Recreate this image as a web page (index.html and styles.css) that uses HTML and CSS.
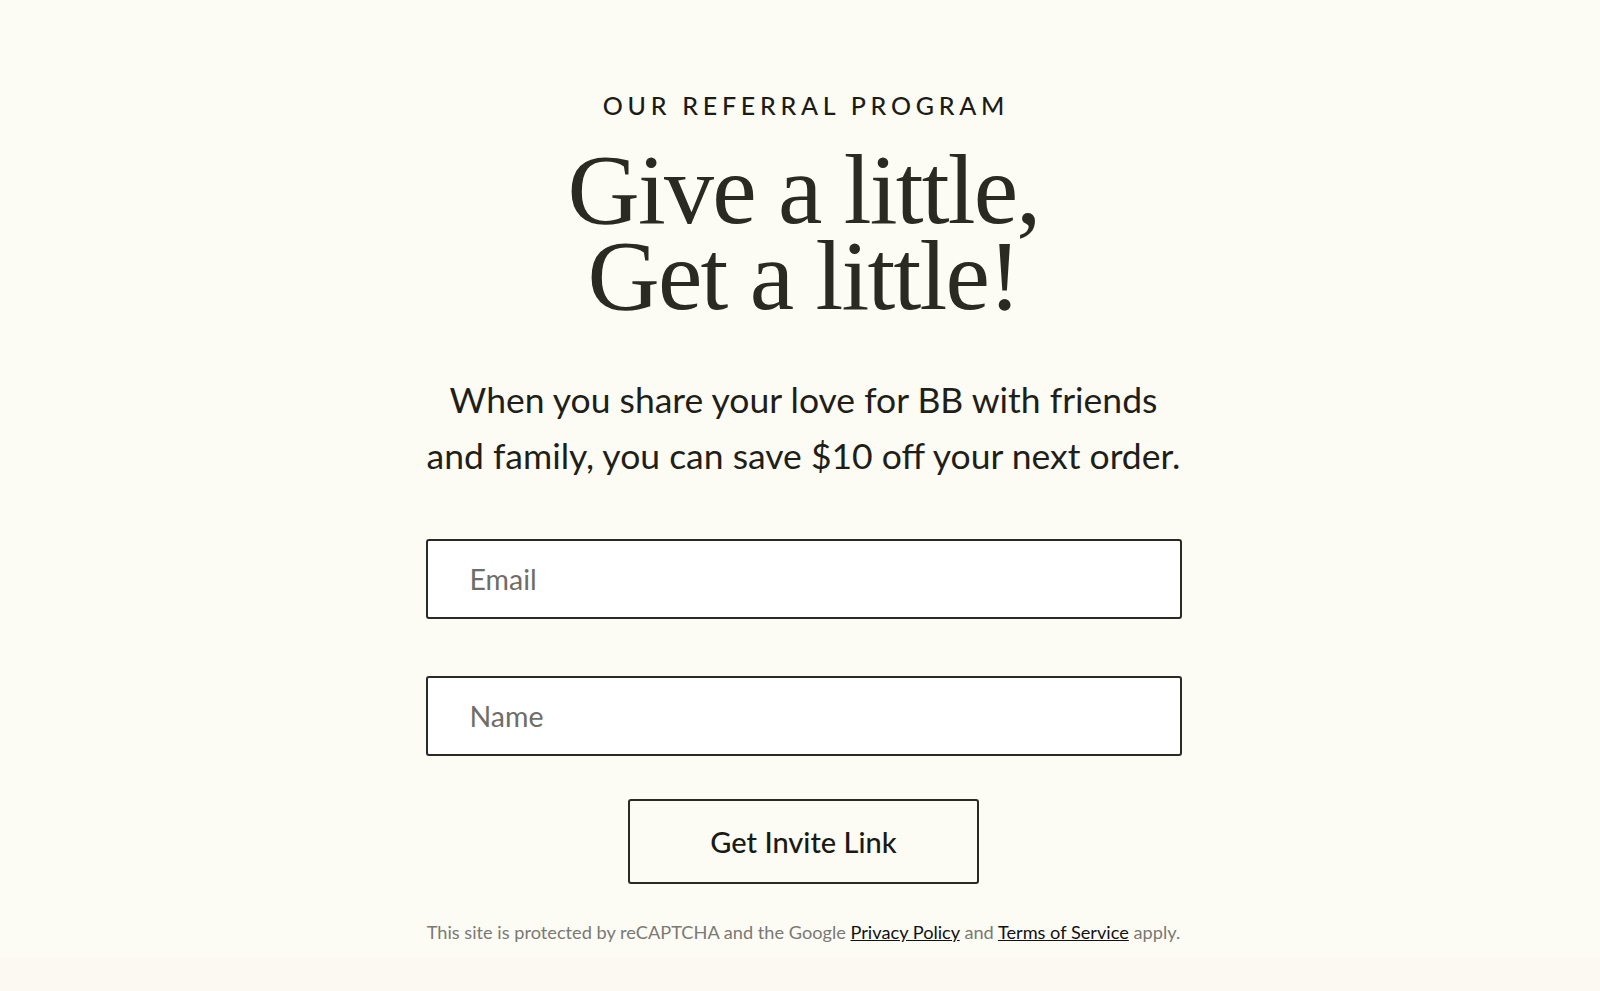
FILE: index.html
```html
<!DOCTYPE html>
<html lang="en">
<head>
<meta charset="utf-8">
<title>Referral Program</title>
<link rel="stylesheet" href="styles.css">
</head>
<body>
<main class="referral">
  <p class="eyebrow">OUR REFERRAL PROGRAM</p>
  <h1 class="headline"><span class="headline-line">Give a little,</span><span class="headline-line">Get a little!</span></h1>
  <p class="intro">When you share your love for BB with friends<br>and family, you can save $10 off your next order.</p>
  <form class="form">
    <input class="field" type="email" placeholder="Email">
    <input class="field field-name" type="text" placeholder="Name">
    <button class="submit" type="button">Get Invite Link</button>
  </form>
  <p class="legal">This site is protected by reCAPTCHA and the Google <a href="#">Privacy Policy</a> and <a href="#">Terms of Service</a> apply.</p>
</main>
<div class="next-band"></div>
</body>
</html>
```

FILE: styles.css
```css
html, body {
  margin: 0;
  padding: 0;
}
body {
  background: #fcfcf5;
  color: #1f1f18;
  font-family: Lato, "Noto Sans", sans-serif;
  height: 991px;
  overflow: hidden;
  display: flex;
  flex-direction: column;
}
.referral {
  width: 756px;
  margin: 0 auto;
  padding: 90px 0 0 7px;
  display: flex;
  flex-direction: column;
  align-items: center;
  text-align: center;
  flex: 1;
}
.eyebrow {
  margin: 0;
  font-size: 25px;
  line-height: 30px;
  letter-spacing: 0.19em;
  font-weight: 500;
  color: #1c1c16;
  padding-left: 0.19em;
}
.headline {
  margin: 27px 0 0;
  font-family: "Liberation Serif", "Times New Roman", serif;
  font-weight: 400;
  font-size: 100px;
  line-height: 86px;
  letter-spacing: -1.8px;
  color: #2a2a22;
  display: flex;
  flex-direction: column;
  align-items: center;
}
.headline-line {
  display: block;
  height: 86px;
  white-space: nowrap;
}
.intro {
  margin: 53px 0 0;
  font-size: 35.5px;
  line-height: 56px;
  color: #1f1f18;
  white-space: nowrap;
}
.form {
  margin-top: 55px;
  width: 756px;
  display: flex;
  flex-direction: column;
  align-items: center;
}
.field {
  box-sizing: border-box;
  width: 756px;
  height: 80px;
  border: 2px solid #2a2a24;
  border-radius: 3px;
  background: #ffffff;
  padding: 0 0 0 42px;
  font-family: Lato, "Noto Sans", sans-serif;
  font-size: 28.5px;
  color: #1f1f18;
  outline: none;
}
.field::placeholder {
  color: #6e6d68;
}
.field-name {
  margin-top: 57px;
}
.submit {
  margin-top: 43px;
  box-sizing: border-box;
  width: 351px;
  height: 85px;
  border: 2px solid #2a2a24;
  border-radius: 3px;
  background: transparent;
  font-family: Lato, "Noto Sans", sans-serif;
  font-size: 29px;
  font-weight: 500;
  color: #1a1a14;
  cursor: pointer;
}
.legal {
  margin: 36px 0 0;
  font-size: 18.2px;
  line-height: 24px;
  color: #7a7973;
  white-space: nowrap;
}
.legal a {
  color: #111;
  text-decoration: underline;
}
.next-band {
  height: 33px;
  background: #fbf9f2;
  flex: none;
}
```
